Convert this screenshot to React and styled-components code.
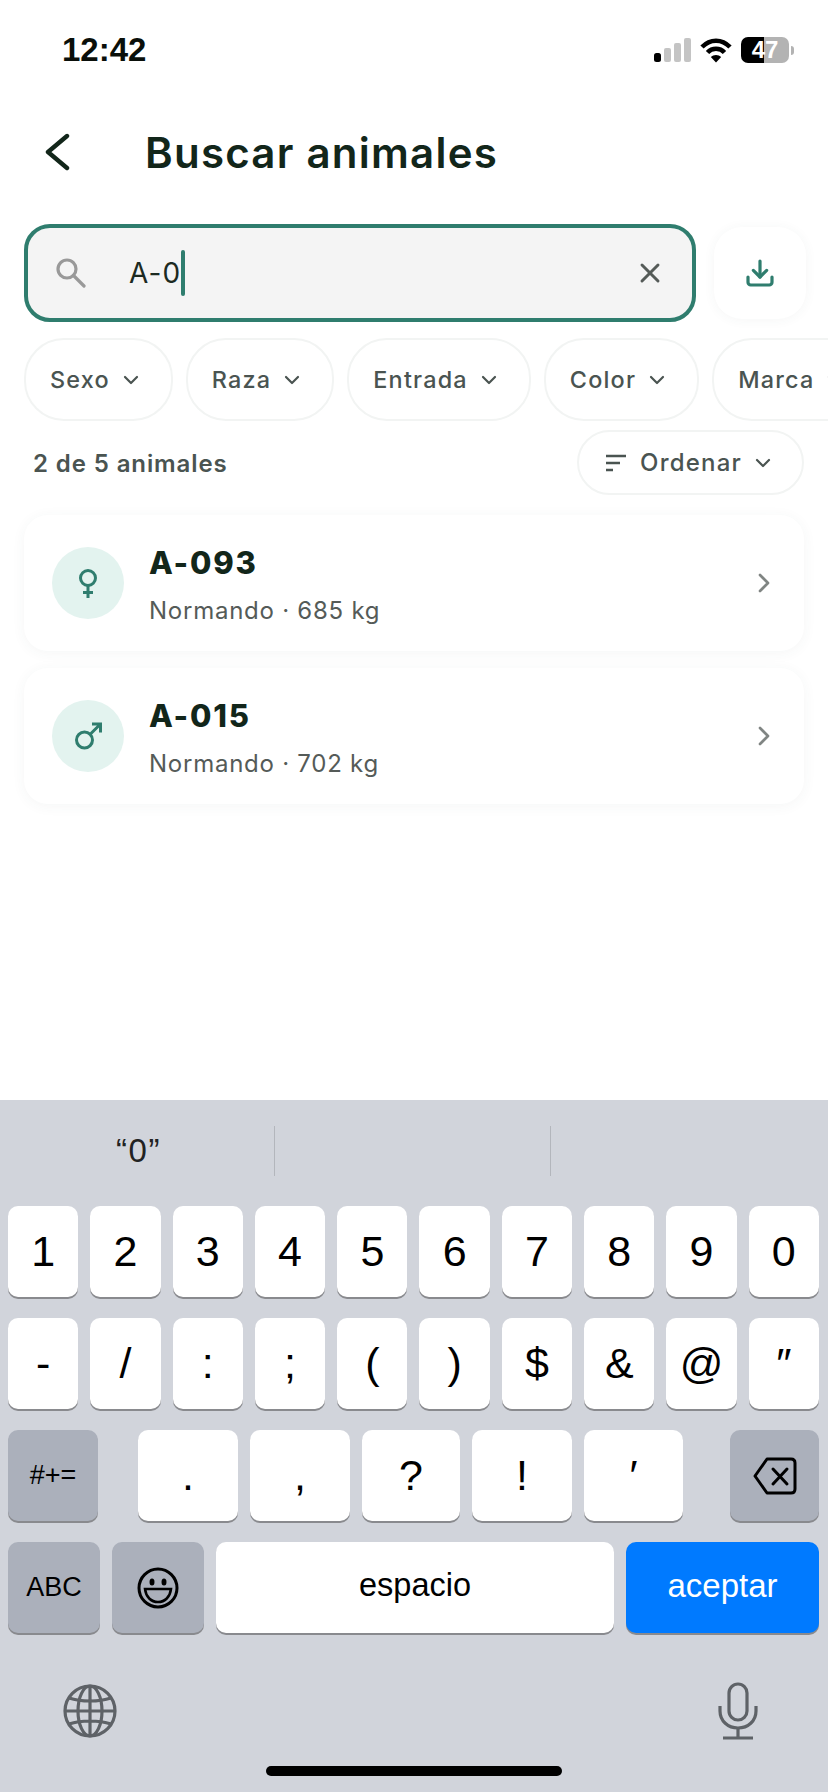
import styled, { createGlobalStyle } from "styled-components";
import { ChevronDown, ChevronRight, X, Download } from "lucide-react";

const GlobalStyle = createGlobalStyle`
  html, body {
    margin: 0;
    padding: 0;
    background: #fff;
  }
  * {
    box-sizing: border-box;
  }
`;

const Page = styled.div`
  width: 828px;
  height: 1792px;
  display: flex;
  flex-direction: column;
  overflow: hidden;
  background: #fff;
  font-family: Inter, "Liberation Sans", sans-serif;
`;

const Main = styled.main`
  flex: 1;
`;

const StatusBar = styled.div`
  height: 100px;
  display: flex;
  align-items: center;
  justify-content: space-between;
  padding: 0 34px 0 62px;
`;

const Time = styled.span`
  font-family: "Liberation Sans", sans-serif;
  font-size: 33px;
  font-weight: 700;
  color: #0a0f0a;
`;

const StatusIcons = styled.div`
  display: flex;
  align-items: center;
  gap: 9px;
`;

const Battery = styled.div`
  width: 48px;
  height: 26px;
  border-radius: 7px;
  background: linear-gradient(90deg, #000 48%, #b3b3b3 48%);
  color: #fff;
  font-family: "Liberation Sans", sans-serif;
  font-size: 24px;
  font-weight: 700;
  display: flex;
  align-items: center;
  justify-content: center;
`;

const BatteryGroup = styled.div`
  display: flex;
  align-items: center;
  gap: 2px;
`;

const BatteryNub = styled.div`
  width: 3px;
  height: 9px;
  border-radius: 0 3px 3px 0;
  background: #b3b3b3;
`;

const Header = styled.header`
  height: 104px;
  display: flex;
  align-items: center;
  padding-left: 44px;
`;

const Title = styled.h1`
  margin: 0 0 0 75px;
  font-size: 42px;
  font-weight: 600;
  letter-spacing: 1.25px;
  color: #12261a;
`;

const SearchRow = styled.div`
  margin-top: 20px;
  display: flex;
  align-items: center;
  gap: 18px;
  padding-left: 24px;
`;

const SearchBox = styled.div`
  width: 672px;
  height: 98px;
  border: 4px solid #2f7d6e;
  border-radius: 26px;
  background: #f4f4f4;
  display: flex;
  align-items: center;
  padding: 0 26px 0 28px;
`;

const SearchText = styled.span`
  margin-left: 43px;
  font-size: 28px;
  letter-spacing: 1.1px;
  color: #1c2a22;
`;

const Caret = styled.span`
  width: 4px;
  height: 46px;
  border-radius: 2px;
  background: #2f7d6e;
`;

const ClearButton = styled.span`
  margin-left: auto;
  display: flex;
  color: #555b58;
`;

const IconButton = styled.div`
  width: 92px;
  height: 92px;
  border-radius: 28px;
  background: #fff;
  box-shadow: 0 1px 12px rgba(50, 80, 70, 0.05);
  display: flex;
  align-items: center;
  justify-content: center;
  color: #2f7d6e;
`;

const Chips = styled.div`
  margin-top: 16px;
  display: flex;
  gap: 13px;
  padding-left: 24px;
`;

const Chip = styled.div`
  flex-shrink: 0;
  height: ${(p) => p.$height || 83}px;
  border: 2px solid #f2f4f3;
  border-radius: 40px;
  background: #fff;
  display: flex;
  align-items: center;
  gap: 9px;
  padding: 0 ${(p) => p.$right || 28}px 0 24px;
  font-size: ${(p) => p.$size || 23.4}px;
  font-weight: 500;
  letter-spacing: 1.2px;
  color: #4a5451;
`;

const SortGlyph = styled.span`
  display: flex;
  margin: 0 4px 0 2px;
`;

const CountRow = styled.div`
  margin-top: 9px;
  display: flex;
  align-items: center;
  justify-content: space-between;
  padding: 0 24px 0 33px;
`;

const Count = styled.span`
  padding-top: 2px;
  font-size: 24px;
  font-weight: 600;
  letter-spacing: 0.9px;
  color: #4a5451;
`;

const Cards = styled.div`
  margin-top: 20px;
  padding: 0 24px;
  display: flex;
  flex-direction: column;
  gap: 17px;
`;

const Card = styled.div`
  height: 136px;
  border-radius: 24px;
  background: #fff;
  box-shadow: 0 2px 14px rgba(50, 80, 70, 0.05);
  display: flex;
  align-items: center;
  padding: 0 24px 0 28px;
`;

const Avatar = styled.div`
  width: 72px;
  height: 72px;
  border-radius: 50%;
  background: #e3f3ef;
  display: flex;
  align-items: center;
  justify-content: center;
`;

const CardBody = styled.div`
  flex: 1;
  margin-left: 25px;
  padding-top: 4px;
  display: flex;
  flex-direction: column;
  gap: 16px;
`;

const AnimalId = styled.span`
  font-size: 31px;
  line-height: 36px;
  font-weight: 800;
  letter-spacing: 1.8px;
  color: #12261a;
`;

const AnimalInfo = styled.span`
  font-size: 24px;
  line-height: 28px;
  letter-spacing: 0.75px;
  color: #555b58;
`;

const Keyboard = styled.section`
  height: 692px;
  background: #d1d4db;
  display: flex;
  flex-direction: column;
  font-family: "Liberation Sans", sans-serif;
  color: #000;
`;

const Suggestions = styled.div`
  height: 106px;
  padding-top: 26px;
  display: flex;
  align-items: flex-start;
`;

const Suggestion = styled.div`
  width: ${(p) => p.$width}px;
  height: 50px;
  padding-left: 3px;
  display: flex;
  align-items: center;
  justify-content: center;
  font-size: 33px;
  letter-spacing: 1.5px;
  color: #222;
  border-right: ${(p) => (p.$divider ? "1px solid #b3b6bc" : "none")};
`;

const KeyRows = styled.div`
  display: flex;
  flex-direction: column;
  gap: 21px;
  padding: 0 9px 0 8px;
`;

const KeyRow = styled.div`
  display: flex;
  gap: 12px;
`;

const KeyGroup = styled.div`
  display: flex;
  gap: 12px;
  margin: 0 auto 0 28px;
`;

const Key = styled.div`
  flex: ${(p) => (p.$width ? `0 0 ${p.$width}px` : "1")};
  height: 91px;
  padding-bottom: ${(p) => (p.$word ? 4 : 0)}px;
  border-radius: 10px;
  display: flex;
  align-items: center;
  justify-content: center;
  font-size: ${(p) => p.$size || 43}px;
  background: ${(p) =>
    p.$variant === "dark" ? "#abb0bb" : p.$variant === "blue" ? "#007aff" : "#fff"};
  color: ${(p) => (p.$variant === "blue" ? "#fff" : "#000")};
  box-shadow: 0 2px 0 #898a8e;
`;

const BottomIcons = styled.div`
  margin-top: 48px;
  height: 60px;
  display: flex;
  align-items: center;
  justify-content: space-between;
  padding: 0 70px 0 63px;
  color: #5e6267;
`;

const HomeBar = styled.div`
  width: 296px;
  height: 10px;
  margin: 25px auto 0;
  border-radius: 5px;
  background: #000;
`;

const SignalIcon = () => (
  <svg width="37" height="26" viewBox="0 0 37 26">
    <rect x="0" y="16" width="7" height="9" rx="2.5" fill="#000" />
    <rect x="10" y="11" width="7" height="14" rx="2" fill="#c4c4c4" />
    <rect x="20" y="6" width="7" height="19" rx="2" fill="#c4c4c4" />
    <rect x="30" y="1" width="7" height="24" rx="2" fill="#c4c4c4" />
  </svg>
);

const WifiIcon = () => (
  <svg width="32" height="26" viewBox="0 0 32 26" fill="none" stroke="#000" strokeWidth="4.5">
    <path d="M2 10 C10 1.5 22 1.5 30 10" />
    <path d="M7.5 15.5 C12 10.5 20 10.5 24.5 15.5" />
    <path d="M16 25.5 L10.8 20 C13.5 17.3 18.5 17.3 21.2 20 Z" fill="#000" stroke="none" />
  </svg>
);

const BackIcon = () => (
  <svg width="26" height="38" viewBox="0 0 26 38" fill="none" stroke="#12261a" strokeWidth="4.4" strokeLinecap="round" strokeLinejoin="round">
    <path d="M23 3 L4 19 L23 35" />
  </svg>
);

const SearchIcon = () => (
  <svg width="30" height="30" viewBox="0 0 30 30" fill="none" stroke="#999" strokeWidth="3.2" strokeLinecap="round">
    <circle cx="11" cy="11" r="9" />
    <path d="M17.5 17.5 L28 28" />
  </svg>
);

const SortIcon = () => (
  <svg width="22" height="22" viewBox="0 0 22 22" fill="none" stroke="#4a5451" strokeWidth="2.4">
    <path d="M1 4 H21 M1 11 H15 M1 18 H8" />
  </svg>
);

const GenderIcon = ({ sex }) => (
  <svg width="32" height="32" viewBox="0 0 32 32" fill="none" stroke="#2f7d6e" strokeWidth="3">
    {sex === "f" ? (
      <>
        <circle cx="16" cy="11" r="7.5" />
        <path d="M16 18.5 V31 M11 25.5 H21" />
      </>
    ) : (
      <>
        <circle cx="12.5" cy="20" r="8" />
        <path d="M18.2 14.3 L27.5 5 M20 4 H28.5 V12.5" />
      </>
    )}
  </svg>
);

const DeleteIcon = () => (
  <svg width="44" height="38" viewBox="0 0 44 38" fill="none" stroke="#000" strokeWidth="3" strokeLinejoin="round">
    <path d="M2 19 L14 2 H38 C40.5 2 42 3.5 42 6 V32 C42 34.5 40.5 36 38 36 H14 Z" />
    <path d="M20 12 L34 27 M34 12 L20 27" strokeLinecap="round" />
  </svg>
);

const EmojiIcon = () => (
  <svg width="42" height="42" viewBox="0 0 42 42" fill="none" stroke="#000" strokeWidth="3">
    <circle cx="21" cy="21" r="19" />
    <ellipse cx="15" cy="15" rx="2.5" ry="3.5" fill="#000" stroke="none" />
    <ellipse cx="27" cy="15" rx="2.5" ry="3.5" fill="#000" stroke="none" />
    <path d="M8 22 H34 C33 30 28 35 21 35 C14 35 9 30 8 22 Z" strokeWidth="2.5" />
  </svg>
);

const GlobeIcon = () => (
  <svg width="54" height="54" viewBox="0 0 54 54" fill="none" stroke="currentColor" strokeWidth="3.2">
    <circle cx="27" cy="27" r="25" />
    <ellipse cx="27" cy="27" rx="12" ry="25" />
    <path d="M27 2 V52 M2 27 H52 M6 14 C18 18 36 18 48 14 M6 40 C18 36 36 36 48 40" />
  </svg>
);

const MicIcon = () => (
  <svg width="40" height="58" viewBox="0 0 40 58" fill="none" stroke="currentColor" strokeWidth="3.2">
    <rect x="11" y="2" width="18" height="36" rx="9" />
    <path d="M2 24 V29 C2 39 10 46 20 46 C30 46 38 39 38 29 V24" />
    <path d="M20 46 V56 M5 56 H35" />
  </svg>
);

const filters = ["Sexo", "Raza", "Entrada", "Color", "Marca"];

const animals = [
  { id: "A-093", sex: "f", info: "Normando · 685 kg" },
  { id: "A-015", sex: "m", info: "Normando · 702 kg" },
];

const digits = ["1", "2", "3", "4", "5", "6", "7", "8", "9", "0"];
const symbols = ["-", "/", ":", ";", "(", ")", "$", "&", "@", "″"];
const punctuation = [
  { label: ".", width: 100 },
  { label: ",", width: 100 },
  { label: "?", width: 98 },
  { label: "!", width: 100 },
  { label: "′", width: 99 },
];

export default function App() {
  return (
    <Page>
      <GlobalStyle />
      <Main>
        <StatusBar>
          <Time>12:42</Time>
          <StatusIcons>
            <SignalIcon />
            <WifiIcon />
            <BatteryGroup>
              <Battery>47</Battery>
              <BatteryNub />
            </BatteryGroup>
          </StatusIcons>
        </StatusBar>

        <Header>
          <BackIcon />
          <Title>Buscar animales</Title>
        </Header>

        <SearchRow>
          <SearchBox>
            <SearchIcon />
            <SearchText>A-0</SearchText>
            <Caret />
            <ClearButton>
              <X size={32} strokeWidth={2.2} />
            </ClearButton>
          </SearchBox>
          <IconButton>
            <Download size={32} strokeWidth={2.4} />
          </IconButton>
        </SearchRow>

        <Chips>
          {filters.map((f) => (
            <Chip key={f}>
              {f}
              <ChevronDown size={24} strokeWidth={2.2} />
            </Chip>
          ))}
        </Chips>

        <CountRow>
          <Count>2 de 5 animales</Count>
          <Chip $height={65} $size={24} $right={27}>
            <SortGlyph>
              <SortIcon />
            </SortGlyph>
            Ordenar
            <ChevronDown size={24} strokeWidth={2.2} />
          </Chip>
        </CountRow>

        <Cards>
          {animals.map((a) => (
            <Card key={a.id}>
              <Avatar>
                <GenderIcon sex={a.sex} />
              </Avatar>
              <CardBody>
                <AnimalId>{a.id}</AnimalId>
                <AnimalInfo>{a.info}</AnimalInfo>
              </CardBody>
              <ChevronRight size={32} color="#808583" strokeWidth={2} />
            </Card>
          ))}
        </Cards>
      </Main>

      <Keyboard>
        <Suggestions>
          <Suggestion $width={275} $divider>“0”</Suggestion>
          <Suggestion $width={276} $divider />
          <Suggestion $width={277} />
        </Suggestions>
        <KeyRows>
          <KeyRow>
            {digits.map((k) => (
              <Key key={k}>{k}</Key>
            ))}
          </KeyRow>
          <KeyRow>
            {symbols.map((k) => (
              <Key key={k}>{k}</Key>
            ))}
          </KeyRow>
          <KeyRow>
            <Key $variant="dark" $width={90} $size={27}>#+=</Key>
            <KeyGroup>
              {punctuation.map((k) => (
                <Key key={k.label} $width={k.width}>{k.label}</Key>
              ))}
            </KeyGroup>
            <Key $variant="dark" $width={89}>
              <DeleteIcon />
            </Key>
          </KeyRow>
          <KeyRow>
            <Key $variant="dark" $width={92} $size={27}>ABC</Key>
            <Key $variant="dark" $width={92}>
              <EmojiIcon />
            </Key>
            <Key $width={398} $size={32.5} $word>espacio</Key>
            <Key $variant="blue" $size={33} $word>aceptar</Key>
          </KeyRow>
        </KeyRows>
        <BottomIcons>
          <GlobeIcon />
          <MicIcon />
        </BottomIcons>
        <HomeBar />
      </Keyboard>
    </Page>
  );
}
